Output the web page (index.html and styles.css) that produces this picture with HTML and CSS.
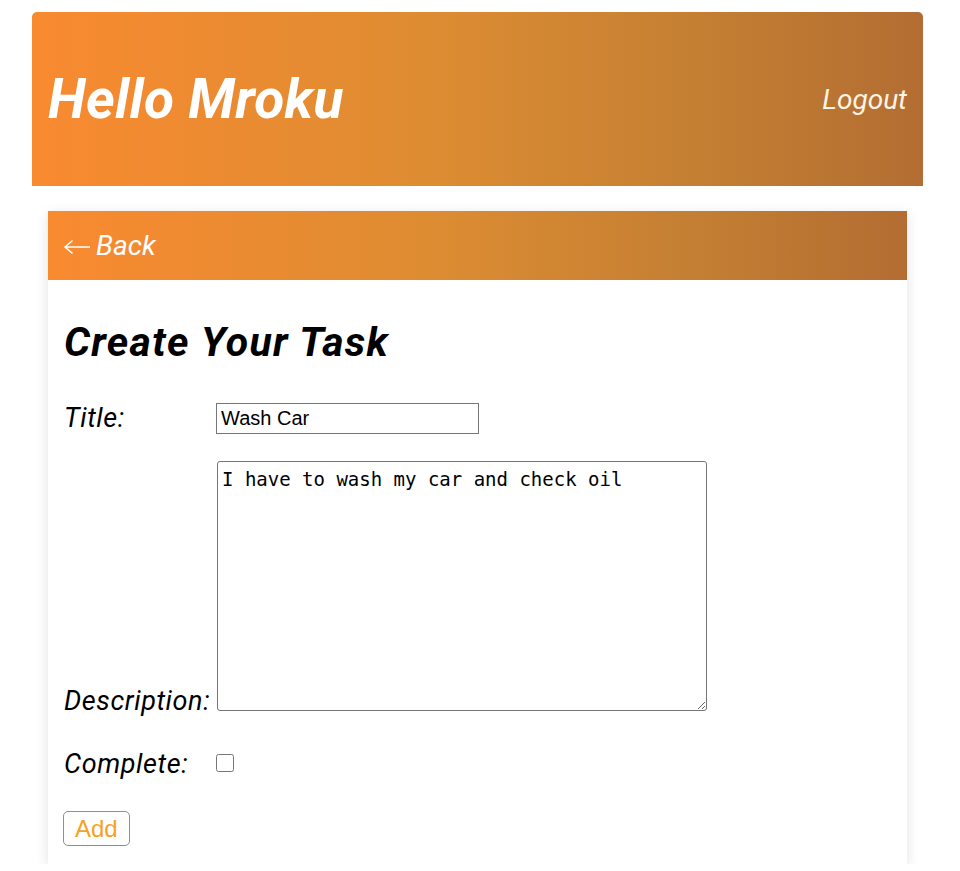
FILE: index.html
```html
<!DOCTYPE html>
<html lang="en">
<head>
<meta charset="utf-8">
<title>Create Your Task</title>
<link rel="stylesheet" href="styles.css">
</head>
<body>
<div class="page">
  <header class="topbar">
    <h1 class="hello">Hello Mroku</h1>
    <a class="logout" href="#">Logout</a>
  </header>
  <main class="card">
    <div class="card-head">
      <a class="back" href="#"><svg class="arrow" width="26" height="14" viewBox="0 0 26 14" aria-hidden="true"><path d="M1 7H26M1 7L8 1M1 7L8 13" fill="none" stroke="#fff" stroke-width="1.6" stroke-linecap="round" stroke-linejoin="round"/></svg><span class="back-txt">Back</span></a>
    </div>
    <div class="card-body">
      <h2 class="title">Create Your Task</h2>
      <form class="form">
        <div class="row row-title">
          <label class="lbl" for="t">Title:</label>
          <input class="inp" id="t" type="text" value="Wash Car">
        </div>
        <div class="row row-desc">
          <label class="lbl" for="d">Description:</label>
          <textarea class="area" id="d">I have to wash my car and check oil</textarea>
        </div>
        <div class="row row-done">
          <label class="lbl" for="c">Complete:</label>
          <input class="chk" id="c" type="checkbox">
        </div>
        <button class="add" type="button">Add</button>
      </form>
    </div>
  </main>
</div>
</body>
</html>
```

FILE: styles.css
```css
html, body {
  margin: 0;
  padding: 0;
  background: #fff;
}

.page {
  width: 891px;
  padding: 12px 0 0 32px;
  font-family: Roboto, "Liberation Sans", sans-serif;
}

.topbar {
  height: 174px;
  display: flex;
  align-items: center;
  justify-content: space-between;
  padding: 0 16px;
  border-radius: 5px 5px 0 0;
  background: linear-gradient(to right, #f98a30 0%, #dd8c32 45%, #c47f33 75%, #b36d32 100%);
}

.hello {
  margin: 0;
  color: #fff;
  font-size: 55px;
  font-style: italic;
  font-weight: 700;
  letter-spacing: 0.3px;
  line-height: 1;
}

.logout {
  color: #fdf4e6;
  font-size: 28px;
  font-style: italic;
  text-decoration: none;
}

.card {
  margin: 25px 16px 0;
  background: #fff;
  box-shadow: 0 3px 12px rgba(0, 0, 0, 0.12);
}

.card-head {
  height: 69px;
  display: flex;
  align-items: center;
  padding: 0 16px;
  background: linear-gradient(to right, #f98a30 0%, #dd8c32 45%, #c47f33 75%, #b36d32 100%);
}

.back {
  display: flex;
  align-items: center;
  gap: 6px;
  color: #fff;
  font-size: 28px;
  font-style: italic;
  text-decoration: none;
}

.arrow {
  display: block;
  margin-top: 3px;
}

.card-body {
  padding: 38px 16px 18px;
}

.title {
  margin: 0 0 37px;
  font-size: 41px;
  font-style: italic;
  font-weight: 700;
  letter-spacing: 1.3px;
  line-height: 48px;
  color: #000;
}

.form {
  margin: 0;
}

.row {
  display: flex;
}

.row-title {
  align-items: center;
  margin-bottom: 27px;
}

.row-desc {
  align-items: flex-end;
  margin-bottom: 38px;
}

.row-done {
  align-items: center;
  margin-bottom: 31px;
}

.lbl {
  flex: 0 0 152px;
  font-size: 27px;
  font-style: italic;
  letter-spacing: 0.6px;
  line-height: 31px;
  color: #000;
}

.row-desc .lbl {
  flex-basis: 153px;
  white-space: nowrap;
  line-height: 20px;
}

.inp {
  box-sizing: border-box;
  width: 263px;
  height: 31px;
  margin: 0;
  padding: 1px 4px;
  border: 1px solid #767676;
  border-radius: 0;
  font-family: Arial, "Liberation Sans", sans-serif;
  font-size: 20px;
  color: #000;
}

.area {
  box-sizing: border-box;
  width: 490px;
  height: 250px;
  margin: 0;
  padding: 6px 4px 4px;
  border: 1px solid #767676;
  border-radius: 3px;
  font-family: "DejaVu Sans Mono", monospace;
  font-size: 19px;
  line-height: 1.2;
  color: #000;
}

.chk {
  width: 18px;
  height: 18px;
  margin: -4px 0 0;
}

.add {
  display: block;
  height: 35px;
  padding: 0 11px;
  margin: 0 0 0 -1px;
  background: #fff;
  border: 1px solid #8f8f8f;
  border-radius: 5px;
  font-family: Arial, "Liberation Sans", sans-serif;
  font-size: 24px;
  color: #f7a11d;
}
```
